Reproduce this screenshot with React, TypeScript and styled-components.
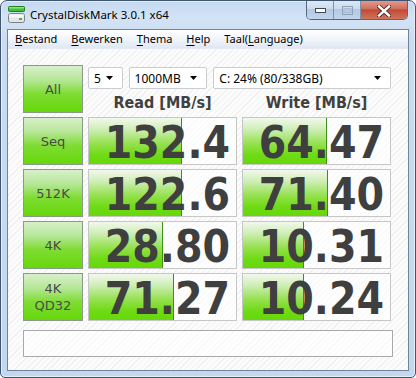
import React from 'react';
import styled, { createGlobalStyle } from 'styled-components';

const GlobalStyle = createGlobalStyle`
    html, body {
        margin: 0;
        padding: 0;
        background: #ffffff;
    }
    * {
        box-sizing: border-box;
    }
`;

interface rowType {
    label: string[];
    read: string;
    readFill: number;
    write: string;
    writeFill: number;
}

const rows: rowType[] = [
    { label: ['Seq'], read: '132.4', readFill: 93, write: '64.47', writeFill: 84 },
    { label: ['512K'], read: '122.6', readFill: 93, write: '71.40', writeFill: 85 },
    { label: ['4K'], read: '28.80', readFill: 74, write: '10.31', writeFill: 61 },
    { label: ['4K', 'QD32'], read: '71.27', readFill: 85, write: '10.24', writeFill: 61 },
];

const menuItems = [
    { key: 'B', rest: 'estand' },
    { key: 'B', rest: 'ewerken' },
    { key: 'T', rest: 'hema' },
    { key: 'H', rest: 'elp' },
];

function AppIcon() {
    return (
        <svg width="17" height="17" viewBox="0 0 17 17">
            <rect x="0.5" y="0.5" width="16" height="5" rx="1" fill="#3fc23a" stroke="#1f7f1f" />
            <rect x="1" y="1" width="15" height="1.5" fill="#8fe27f" />
            <rect x="0.5" y="7.5" width="16" height="9" rx="2" fill="#e4e6e8" stroke="#7d8288" />
            <rect x="1.5" y="8.5" width="14" height="3" fill="#f7f8f9" />
            <rect x="11" y="12" width="3" height="2" fill="#37c040" />
        </svg>
    );
}

function Arrow() {
    return (
        <svg width="7" height="4" viewBox="0 0 7 4">
            <path d="M0 0 H7 L3.5 4 Z" fill="#000" />
        </svg>
    );
}

function ResultCell({ value, fill }: { value: string; fill: number }) {
    return (
        <Cell>
            <Fill style={{ width: fill }} />
            <Value>{value}</Value>
        </Cell>
    );
}

export default function App() {
    return (
        <>
            <GlobalStyle />
            <Window>
                <TitleBar>
                    <AppIcon />
                    <Title>CrystalDiskMark 3.0.1 x64</Title>
                    <Controls>
                        <CtrlButton>
                            <svg width="11" height="5" viewBox="0 0 11 5">
                                <rect x="0.5" y="0.5" width="10" height="4" fill="#fff" stroke="#3b4a5c" />
                            </svg>
                        </CtrlButton>
                        <CtrlButton>
                            <svg width="11" height="9" viewBox="0 0 11 9">
                                <rect x="0.5" y="0.5" width="10" height="8" fill="none" stroke="#8ea3bb" />
                                <rect x="2" y="2.5" width="7" height="4" fill="none" stroke="#a9bbd0" />
                            </svg>
                        </CtrlButton>
                        <CloseButton>
                            <svg width="14" height="12" viewBox="0 0 14 12">
                                <path d="M2 1.5 L12 10.5 M12 1.5 L2 10.5" stroke="#4a2a25" strokeWidth="4.2" strokeLinecap="square" />
                                <path d="M2 1.5 L12 10.5 M12 1.5 L2 10.5" stroke="#ffffff" strokeWidth="2.4" strokeLinecap="square" />
                            </svg>
                        </CloseButton>
                    </Controls>
                </TitleBar>
                <Client>
                    <MenuBar>
                        {menuItems.map((m, i) => (
                            <MenuItem key={i}>
                                <u>{m.key}</u>
                                {m.rest}
                            </MenuItem>
                        ))}
                        <MenuItem>
                            Taal(<u>L</u>anguage)
                        </MenuItem>
                    </MenuBar>
                    <Body>
                        <Grid>
                            <GreenButton>All</GreenButton>
                            <TopArea>
                                <Selects>
                                    <Select $width={35}>
                                        5<Arrow />
                                    </Select>
                                    <Select $width={80}>
                                        1000MB
                                        <Arrow />
                                    </Select>
                                    <Select $width={181}>
                                        C: 24% (80/338GB)
                                        <Arrow />
                                    </Select>
                                </Selects>
                                <Headers>
                                    <Header>Read [MB/s]</Header>
                                    <Header>Write [MB/s]</Header>
                                </Headers>
                            </TopArea>
                            {rows.map((r, i) => (
                                <React.Fragment key={i}>
                                    <GreenButton>
                                        {r.label.map((l, j) => (
                                            <span key={j}>{l}</span>
                                        ))}
                                    </GreenButton>
                                    <ResultCell value={r.read} fill={r.readFill} />
                                    <ResultCell value={r.write} fill={r.writeFill} />
                                </React.Fragment>
                            ))}
                        </Grid>
                        <StatusBox />
                    </Body>
                </Client>
            </Window>
        </>
    );
}

const Window = styled.div`
    width: 416px;
    height: 378px;
    display: flex;
    flex-direction: column;
    border: 1px solid #3e5572;
    border-radius: 7px 7px 5px 5px;
    background: linear-gradient(to bottom, #c3d8f0 0px, #d3e3f5 16px, #c9dcf1 40px, #c3d7ee 100%);
    box-shadow: inset 0 0 0 1px #e6eff9;
    overflow: hidden;
`;

const TitleBar = styled.div`
    height: 28px;
    display: flex;
    align-items: flex-start;
    padding: 5px 0 0 7px;
    flex-shrink: 0;
`;

const Title = styled.div`
    margin: 1px 0 0 5px;
    font-family: 'Noto Sans', 'DejaVu Sans', sans-serif;
    font-size: 11.5px;
    line-height: 16px;
    color: #000;
`;

const Controls = styled.div`
    margin-left: auto;
    margin-right: 7px;
    margin-top: -6px;
    display: flex;
    height: 20px;
    border: 1px solid #56687f;
    border-top: none;
    border-radius: 0 0 5px 5px;
    overflow: hidden;
`;

const CtrlButton = styled.div`
    width: 27px;
    height: 19px;
    display: flex;
    justify-content: center;
    align-items: center;
    padding-top: 2px;
    border-right: 1px solid #7f92aa;
    background: linear-gradient(to bottom, #dfe9f5 0%, #cddcee 45%, #b4c8e1 50%, #c2d5ec 100%);
`;

const CloseButton = styled.div`
    width: 46px;
    height: 19px;
    display: flex;
    justify-content: center;
    align-items: center;
    padding-top: 2px;
    background: linear-gradient(to bottom, #e3a093 0%, #d2705f 45%, #c14b34 52%, #d0735c 100%);
`;

const Client = styled.div`
    flex: 1;
    margin: 0 6px 6px 6px;
    border: 1px solid #6f839b;
    display: flex;
    flex-direction: column;
    background: #fafafa;
`;

const MenuBar = styled.div`
    height: 19px;
    display: flex;
    align-items: center;
    background: linear-gradient(to bottom, #ffffff 0%, #f1f5fb 50%, #dfe7f2 100%);
    border-bottom: 1px solid #e4eaf2;
    flex-shrink: 0;
`;

const MenuItem = styled.div`
    padding: 0 7px;
    font-family: 'Noto Sans', 'DejaVu Sans', sans-serif;
    font-size: 11px;
    line-height: 16px;
    color: #000;

    u {
        text-decoration: underline;
        text-underline-offset: 2px;
    }
`;

const Body = styled.div`
    flex: 1;
    padding: 16px 0 0 15px;
    background: repeating-linear-gradient(135deg, #fcfcfc 0px, #fcfcfc 3px, #f0f0f0 3px, #f0f0f0 4px);
`;

const Grid = styled.div`
    display: grid;
    grid-template-columns: 60px 149px 149px;
    grid-auto-rows: 48px;
    column-gap: 5px;
    row-gap: 4px;
`;

const GreenButton = styled.div`
    display: flex;
    flex-direction: column;
    justify-content: center;
    align-items: center;
    border: 1px solid #8a9a88;
    background: linear-gradient(to bottom, #d8f0cb 0%, #b6e798 30%, #7fdc33 60%, #66d80a 100%);
    font-family: 'DejaVu Sans', sans-serif;
    font-size: 13px;
    line-height: 17px;
    color: #4a4a4a;
`;

const TopArea = styled.div`
    grid-column: 2 / span 2;
    display: flex;
    flex-direction: column;
    padding-top: 2px;
`;

const Selects = styled.div`
    display: flex;
    gap: 6px;
`;

const Select = styled.div<{ $width: number }>`
    width: ${(p) => p.$width}px;
    height: 22px;
    display: flex;
    align-items: center;
    justify-content: space-between;
    padding: 0 9px 0 5px;
    border: 1px solid #c9ccd0;
    border-radius: 2px;
    background: #ffffff;
    font-family: 'Noto Sans', 'DejaVu Sans', sans-serif;
    font-size: 12px;
    color: #000;
`;

const Headers = styled.div`
    display: grid;
    grid-template-columns: 149px 149px;
    column-gap: 5px;
    margin-top: 4px;
`;

const Header = styled.div`
    text-align: center;
    font-family: 'DejaVu Sans Condensed', 'DejaVu Sans', sans-serif;
    font-weight: bold;
    font-size: 16px;
    line-height: 20px;
    color: #404040;
`;

const Cell = styled.div`
    position: relative;
    display: flex;
    align-items: center;
    justify-content: flex-end;
    padding: 0 6px 0 0;
    border: 1px solid #c6c6c6;
    background: rgba(255, 255, 255, 0.6);
`;

const Fill = styled.div`
    position: absolute;
    left: 0;
    top: 0;
    bottom: 0;
    border-right: 1px solid #3f8f1c;
    background: linear-gradient(to bottom, #f2f8ee 0%, #cdeeb4 25%, #96e150 55%, #6edb14 80%, #66d80a 100%);
`;

const Value = styled.div`
    position: relative;
    margin-top: 4px;
    font-family: 'DejaVu Sans Condensed', 'DejaVu Sans', sans-serif;
    font-weight: bold;
    font-size: 44px;
    line-height: 42px;
    color: #3f3f3f;
`;

const StatusBox = styled.div`
    width: 370px;
    height: 27px;
    margin-top: 9px;
    border: 1px solid #a9a9a9;
    background: rgba(255, 255, 255, 0.5);
`;
